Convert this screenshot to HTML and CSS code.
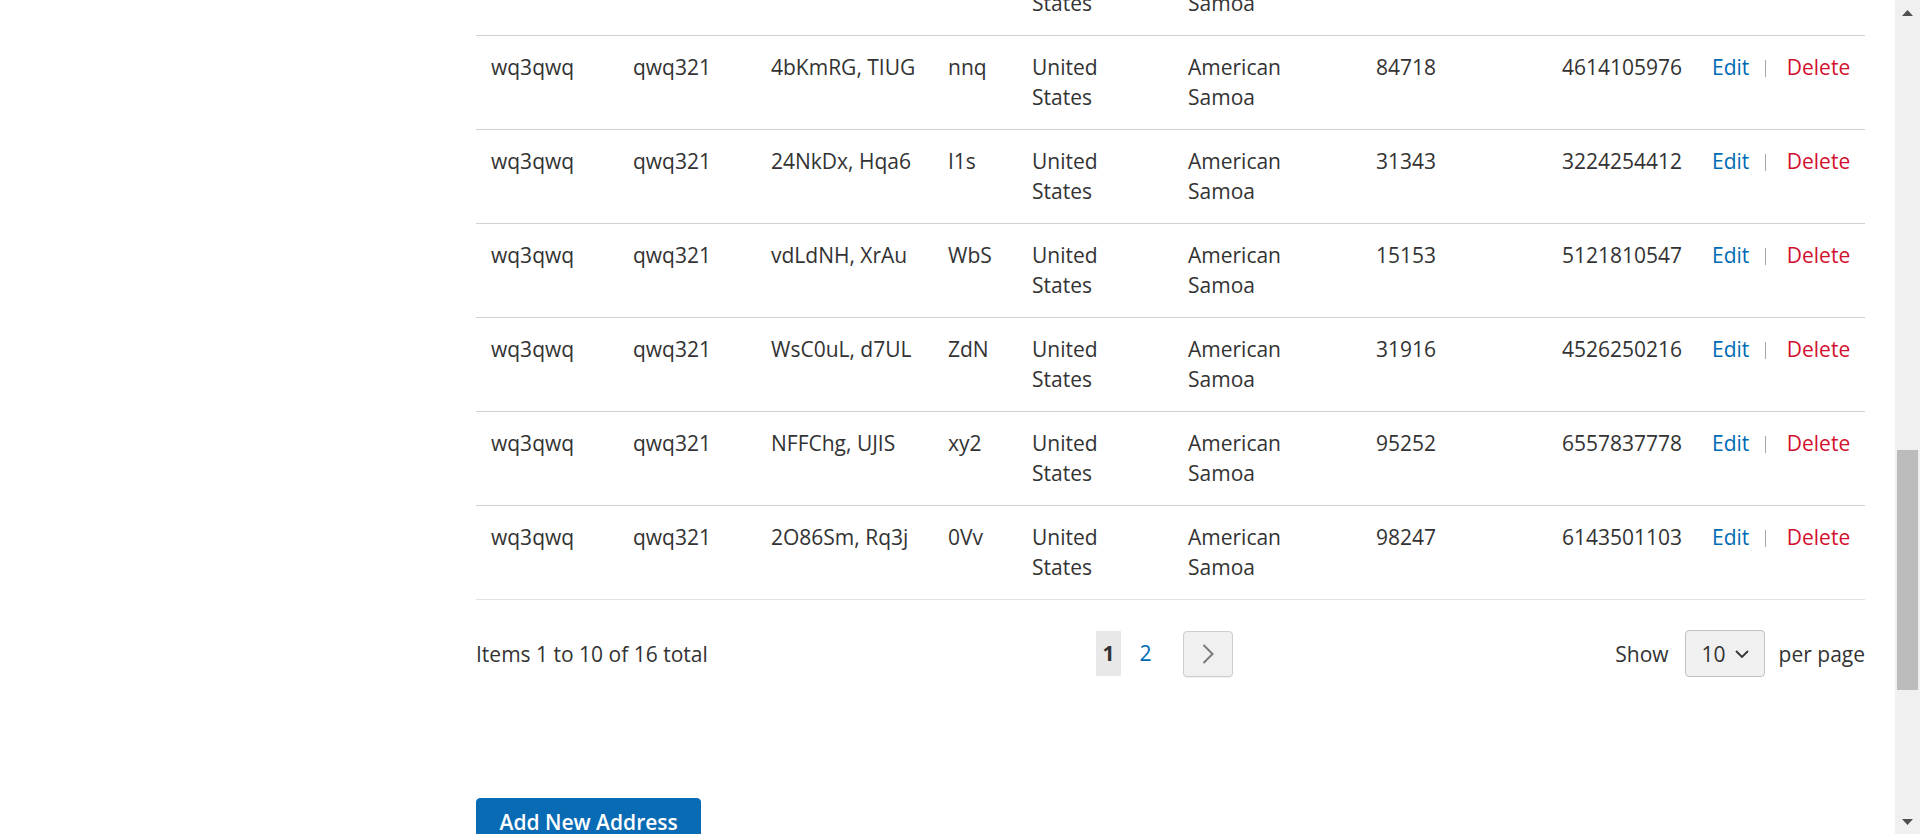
FILE: index.html
```html
<!DOCTYPE html>
<html lang="en">
<head>
<meta charset="utf-8">
<title>Address Book</title>
<link rel="stylesheet" href="styles.css">
</head>
<body>
<header class="page-header">
  <div class="panel">
    <div class="panel-inner">
      <span class="welcome">Welcome, wq3qwq qwq321!</span>
      <span class="panel-links">My Account</span>
    </div>
  </div>
  <div class="header-content">
    <span class="logo">LUMA</span>
    <div class="search">Search entire store here...</div>
  </div>
  <nav class="nav">
    <span>What's New</span><span>Women</span><span>Men</span><span>Gear</span><span>Training</span><span>Sale</span>
  </nav>
</header>

<div class="columns">
  <aside class="sidebar">
    <ul class="account-nav">
      <li>My Account</li>
      <li>My Orders</li>
      <li>My Downloadable Products</li>
      <li>My Wish List</li>
      <li class="current">Address Book</li>
      <li>Account Information</li>
      <li>Stored Payment Methods</li>
      <li>My Product Reviews</li>
      <li>Newsletter Subscriptions</li>
    </ul>
  </aside>

  <main class="main">
    <h1 class="page-title">Address Book</h1>

    <section class="block">
      <h2 class="block-title">Default Addresses</h2>
      <div class="boxes">
        <div class="box">
          <h3 class="box-title">Default Billing Address</h3>
          <p>wq3qwq qwq321<br>xK2pQe, 9hTz<br>Pago Pago, American Samoa, 96799<br>United States<br>T: 3021458866</p>
        </div>
        <div class="box">
          <h3 class="box-title">Default Shipping Address</h3>
          <p>wq3qwq qwq321<br>xK2pQe, 9hTz<br>Pago Pago, American Samoa, 96799<br>United States<br>T: 3021458866</p>
        </div>
      </div>
    </section>

    <section class="block">
      <h2 class="block-title">Additional Address Entries</h2>
      <table class="grid">
        <colgroup>
          <col class="c-first"><col class="c-last"><col class="c-street"><col class="c-city"><col class="c-country"><col class="c-state"><col class="c-zip"><col class="c-phone"><col class="c-actions">
        </colgroup>
        <thead>
          <tr><th>First Name</th><th>Last Name</th><th>Street Address</th><th>City</th><th>Country</th><th>State</th><th>Zip/Postal Code</th><th>Phone</th><th></th></tr>
        </thead>
        <tbody>
          <tr><td>wq3qwq</td><td>qwq321</td><td class="street">Hd8pLm, Qa2W</td><td>kPz</td><td>United States</td><td>American Samoa</td><td>40417</td><td>5816203347</td><td class="actions"><a class="act-edit">Edit</a> <a class="act-delete">Delete</a></td></tr>
          <tr><td>wq3qwq</td><td>qwq321</td><td class="street">Rm3TcV, bN7e</td><td>Gt4</td><td>United States</td><td>American Samoa</td><td>62280</td><td>4730915562</td><td class="actions"><a class="act-edit">Edit</a> <a class="act-delete">Delete</a></td></tr>
          <tr><td>wq3qwq</td><td>qwq321</td><td class="street">uY6sKo, Pe1d</td><td>mQa</td><td>United States</td><td>American Samoa</td><td>17735</td><td>6308124490</td><td class="actions"><a class="act-edit">Edit</a> <a class="act-delete">Delete</a></td></tr>
          <tr><td>wq3qwq</td><td>qwq321</td><td class="street">Zc0hWn, Lr5J</td><td>vB2</td><td>United States</td><td>American Samoa</td><td>53306</td><td>3957021184</td><td class="actions"><a class="act-edit">Edit</a> <a class="act-delete">Delete</a></td></tr>
          <tr id="row-anchor"><td>wq3qwq</td><td>qwq321</td><td class="street">4bKmRG, TIUG</td><td>nnq</td><td>United States</td><td>American Samoa</td><td>84718</td><td>4614105976</td><td class="actions"><a class="act-edit">Edit</a> <a class="act-delete">Delete</a></td></tr>
          <tr><td>wq3qwq</td><td>qwq321</td><td class="street">24NkDx, Hqa6</td><td>I1s</td><td>United States</td><td>American Samoa</td><td>31343</td><td>3224254412</td><td class="actions"><a class="act-edit">Edit</a> <a class="act-delete">Delete</a></td></tr>
          <tr><td>wq3qwq</td><td>qwq321</td><td class="street">vdLdNH, XrAu</td><td>WbS</td><td>United States</td><td>American Samoa</td><td>15153</td><td>5121810547</td><td class="actions"><a class="act-edit">Edit</a> <a class="act-delete">Delete</a></td></tr>
          <tr><td>wq3qwq</td><td>qwq321</td><td class="street">WsC0uL, d7UL</td><td>ZdN</td><td>United States</td><td>American Samoa</td><td>31916</td><td>4526250216</td><td class="actions"><a class="act-edit">Edit</a> <a class="act-delete">Delete</a></td></tr>
          <tr><td>wq3qwq</td><td>qwq321</td><td class="street">NFFChg, UJIS</td><td>xy2</td><td>United States</td><td>American Samoa</td><td>95252</td><td>6557837778</td><td class="actions"><a class="act-edit">Edit</a> <a class="act-delete">Delete</a></td></tr>
          <tr><td>wq3qwq</td><td>qwq321</td><td class="street">2O86Sm, Rq3j</td><td>0Vv</td><td>United States</td><td>American Samoa</td><td>98247</td><td>6143501103</td><td class="actions"><a class="act-edit">Edit</a> <a class="act-delete">Delete</a></td></tr>
        </tbody>
      </table>

      <div class="toolbar">
        <p class="amount">Items 1 to 10 of 16 total</p>
        <ul class="pages">
          <li class="page current">1</li>
          <li class="page"><a class="page-link">2</a></li>
          <li class="page-next">
            <svg width="12" height="20" viewBox="0 0 12 20"><polyline points="1.5,1 10.5,10 1.5,19" fill="none" stroke="#7a7a7a" stroke-width="2"/></svg>
          </li>
        </ul>
        <div class="limiter">
          <span>Show</span>
          <select class="limiter-select"><option>10</option><option>20</option><option>50</option></select>
          <span>per page</span>
        </div>
      </div>
    </section>

    <div class="actions-toolbar">
      <button class="btn-primary" type="button">Add New Address</button>
    </div>
  </main>
</div>

<footer class="page-footer">
  <div class="footer-inner">
    <ul class="footer-links"><li>About us</li><li>Customer Service</li><li>Search Terms</li><li>Privacy and Cookie Policy</li><li>Advanced Search</li><li>Orders and Returns</li><li>Contact Us</li></ul>
  </div>
  <div class="copyright">Copyright © 2013-present Magento, Inc. All rights reserved.</div>
</footer>

<div class="scrollbar" aria-hidden="true">
  <div class="sb-btn"><svg width="11" height="6" viewBox="0 0 11 6"><path d="M0 6 L5.5 0 L11 6 Z" fill="#505050"/></svg></div>
  <div class="sb-track"><div class="sb-thumb"></div></div>
  <div class="sb-btn"><svg width="11" height="6" viewBox="0 0 11 6"><path d="M0 0 L5.5 6 L11 0 Z" fill="#505050"/></svg></div>
</div>
<script src="script.js"></script>
</body>
</html>
```

FILE: styles.css
```css
* { box-sizing: border-box; }

html { scrollbar-width: none; }
html, body { margin: 0; padding: 0; }

body {
  font-family: "Open Sans", "Liberation Sans", sans-serif;
  font-size: 21px;
  line-height: 30px;
  color: #333;
  background: #fff;
  margin-right: 25px;
}

/* window scrollbar, as drawn by the browser */
.scrollbar {
  position: fixed;
  top: 0;
  right: 0;
  bottom: 0;
  width: 25px;
  background: #f0f0f0;
  display: flex;
  flex-direction: column;
}
.sb-btn {
  height: 25px;
  flex: none;
  display: flex;
  align-items: center;
  justify-content: center;
}
.sb-track { flex: 1; padding: 0 2px; }
.sb-thumb { margin-top: 425px; height: 240px; background: #bcbcbc; }

/* header (scrolled out of view) */
.panel { background: #6e716e; color: #fff; }
.panel-inner { display: flex; justify-content: flex-end; gap: 30px; padding: 10px 30px; }
.header-content { display: flex; justify-content: space-between; align-items: center; padding: 30px 30px; }
.logo { font-size: 42px; font-weight: 700; letter-spacing: 4px; color: #555; }
.search { width: 420px; border: 1px solid #c2c2c2; padding: 8px 14px; color: #999; }
.nav { background: #f0f0f0; display: flex; gap: 40px; padding: 20px 60px; font-weight: 700; }

.columns { display: flex; padding: 60px 30px 0; }
.sidebar { width: 446px; flex: none; padding-right: 60px; }
.account-nav { list-style: none; margin: 0; padding: 22px 0; background: #f5f5f5; }
.account-nav li { padding: 8px 27px; }
.account-nav .current { border-left: 4px solid #ff5501; font-weight: 600; padding-left: 23px; }
.main { flex: 1; min-width: 0; }

.page-title { font-size: 60px; line-height: 1.1; font-weight: 300; margin: 0 0 45px; }
.block { margin-bottom: 60px; }
.block-title { font-size: 33px; font-weight: 300; margin: 0 0 24px; padding-bottom: 15px; border-bottom: 1px solid #c6c6c6; line-height: 1.2; }
.boxes { display: flex; gap: 60px; }
.box { flex: 1; }
.box-title { font-size: 21px; font-weight: 600; margin: 0 0 15px; }
.box p { margin: 0; }

/* table */
.grid { width: 100%; border-collapse: separate; border-spacing: 0; table-layout: fixed; }
.c-first { width: 142px; }
.c-last { width: 138px; }
.c-street { width: 177px; }
.c-city { width: 84px; }
.c-country { width: 156px; }
.c-state { width: 188px; }
.c-zip { width: 186px; }
.c-phone { width: 150px; }
.c-actions { width: 168px; }
.grid th { text-align: left; font-weight: 600; padding: 12px 15px; }
.grid td { padding: 15.5px 15px 17.5px; vertical-align: top; border-top: 1px solid #d1d1d1; }
.grid tbody tr:last-child td { border-bottom: 1px solid #e3e3e3; }
.grid .street { white-space: nowrap; }
.actions { white-space: nowrap; }
.act-edit { color: #006bb4; }
.act-edit::after {
  content: "";
  display: inline-block;
  border-left: 1px solid #a6a6a6;
  height: 17px;
  margin: 0 15px 0 16px;
  vertical-align: -2px;
}
.act-delete { color: #d3102e; }

/* toolbar */
.toolbar {
  display: grid;
  grid-template-columns: 620px auto 1fr;
  align-items: center;
  margin-top: 30px;
  height: 47px;
}
.amount { margin: 0; }
.pages { list-style: none; margin: 0; padding: 0; display: flex; align-items: center; }
.page { width: 25px; height: 45px; line-height: 45px; text-align: center; }
.page.current { background: #e8e8e8; font-weight: 700; }
.page + .page { margin-left: 12px; }
.page-link { color: #006bb4; }
.page-next {
  margin-left: 25px;
  width: 50px;
  height: 46px;
  border: 1px solid #cdcdcd;
  border-radius: 4px;
  background: #f0f0f0;
  display: flex;
  align-items: center;
  justify-content: center;
  box-shadow: 0 1px 1px rgba(0,0,0,0.06);
}
.limiter { justify-self: end; display: flex; align-items: center; }
.limiter-select {
  appearance: none;
  -webkit-appearance: none;
  margin: 0 14px 0 16px;
  width: 80px;
  height: 47px;
  padding: 0 0 0 16px;
  font-family: inherit;
  font-size: 21px;
  color: #333;
  border: 1px solid #c2c2c2;
  border-radius: 4px;
  background-color: #f0f0f0;
  background-image: url("data:image/svg+xml;utf8,<svg xmlns='http://www.w3.org/2000/svg' width='14' height='8'><polyline points='1,1 7,7 13,1' fill='none' stroke='%23333' stroke-width='1.8'/></svg>");
  background-repeat: no-repeat;
  background-position: right 15px center;
}

/* primary action */
.actions-toolbar { margin-top: 121px; }
.btn-primary {
  font-family: inherit;
  font-size: 21px;
  font-weight: 600;
  line-height: 24px;
  color: #fff;
  background: #0a6bb5;
  border: 1px solid #0a6bb5;
  border-radius: 4px;
  padding: 10.5px 22.5px;
}

/* footer (below the view) */
.page-footer { margin-top: 75px; background: #f4f4f4; }
.footer-inner { padding: 45px 30px; }
.footer-links { list-style: none; margin: 0; padding: 0; display: flex; flex-direction: column; gap: 6px; }
.copyright { background: #6e716e; color: #fff; text-align: center; padding: 15px; font-size: 18px; }
```

FILE: script.js
```js
function placeView() {
  var anchor = document.getElementById('row-anchor');
  var y = anchor.getBoundingClientRect().top + window.scrollY - 35;
  window.scrollTo(0, y);
}
placeView();
window.addEventListener('load', placeView);
```
